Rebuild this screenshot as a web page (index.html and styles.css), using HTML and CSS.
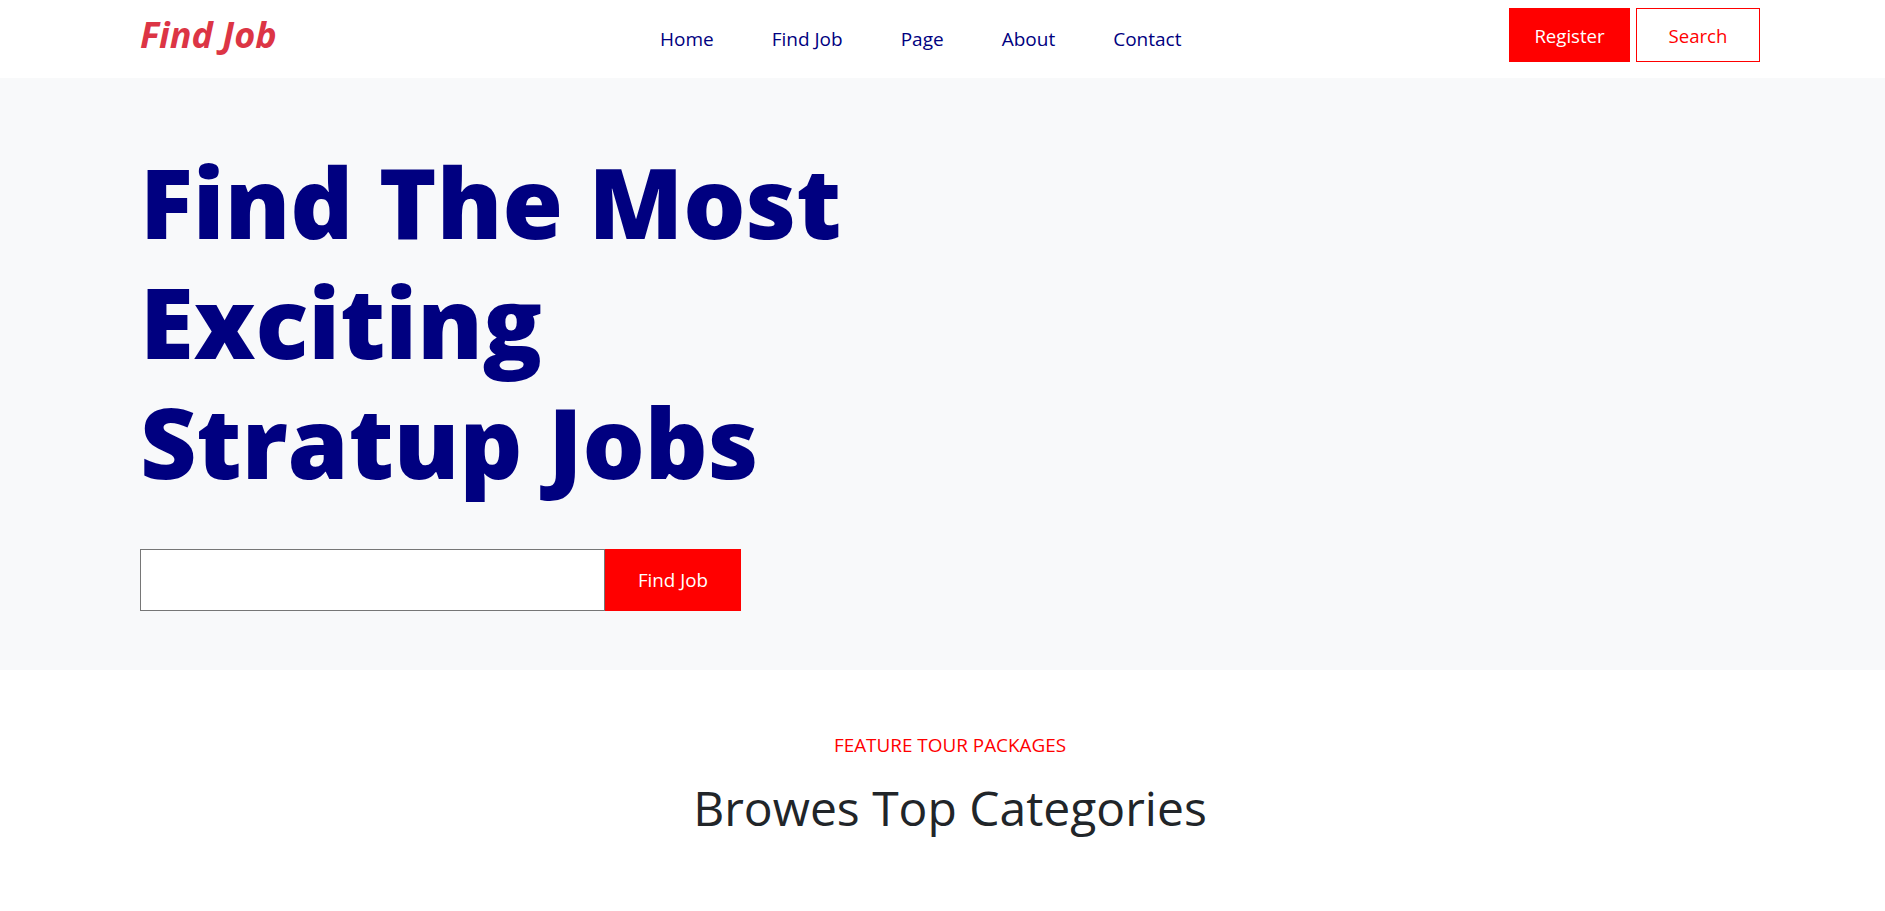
FILE: index.html
```html
<!DOCTYPE html>
<html lang="en">
<head>
<meta charset="utf-8">
<title>Find Job</title>
<link rel="stylesheet" href="styles.css">
</head>
<body>
<header class="site-header">
  <a class="brand" href="#">Find Job</a>
  <nav class="main-nav">
    <a class="nav-link" href="#">Home</a>
    <a class="nav-link" href="#">Find Job</a>
    <a class="nav-link" href="#">Page</a>
    <a class="nav-link" href="#">About</a>
    <a class="nav-link" href="#">Contact</a>
  </nav>
  <div class="header-actions">
    <a class="btn btn-register" href="#">Register</a>
    <a class="btn btn-search" href="#">Search</a>
  </div>
</header>

<section class="hero">
  <div class="hero-inner">
    <h1 class="hero-title">Find The Most<br>Exciting<br>Stratup Jobs</h1>
    <form class="job-search">
      <input class="job-input" type="text" aria-label="Search jobs">
      <button class="job-button" type="button">Find Job</button>
    </form>
  </div>
</section>

<section class="categories">
  <p class="eyebrow">FEATURE TOUR PACKAGES</p>
  <h2 class="section-title">Browes Top Categories</h2>
</section>
</body>
</html>
```

FILE: styles.css
```css
* { box-sizing: border-box; }

body {
  margin: 0;
  font-family: "Open Sans", "Noto Sans", sans-serif;
  color: #212529;
  background: #fff;
}

a { text-decoration: none; }

.site-header {
  height: 78px;
  padding: 8px 125px 0 140px;
  display: grid;
  grid-template-columns: 520px auto 1fr;
  align-items: start;
  background: #fff;
}

.brand {
  font-size: 36px;
  line-height: 54px;
  font-weight: 700;
  font-style: italic;
  color: #dc3545;
}

.main-nav {
  display: flex;
  gap: 58px;
  padding-top: 4px;
}

.nav-link {
  font-size: 19px;
  line-height: 54px;
  color: #000080;
}

.header-actions {
  justify-self: end;
  display: flex;
  gap: 6px;
}

.btn {
  height: 54px;
  display: flex;
  align-items: center;
  justify-content: center;
  font-size: 18.6px;
}

.btn-register {
  width: 121px;
  background: #ff0000;
  color: #fff;
}

.btn-search {
  width: 124px;
  border: 1px solid #ff0000;
  color: #ff0000;
  background: #fff;
}

.hero {
  background: #f8f9fa;
  padding: 63px 0 59px 140px;
}

.hero-title {
  margin: 0;
  font-size: 98px;
  line-height: 120px;
  font-weight: 800;
  color: #000080;
}

.job-search {
  margin-top: 48px;
  display: flex;
  width: 601px;
  height: 62px;
}

.job-input {
  width: 465px;
  height: 62px;
  border: 1px solid #767676;
  background: #fff;
  margin: 0;
  padding: 0 12px;
  font: inherit;
}

.job-button {
  width: 136px;
  height: 62px;
  border: 0;
  margin: 0;
  background: #ff0000;
  color: #fff;
  font-family: inherit;
  font-size: 18.8px;
}

.categories {
  padding: 62px 125px 40px 140px;
  text-align: center;
}

.eyebrow {
  margin: 0;
  font-size: 18.9px;
  line-height: 26px;
  color: #ff0000;
}

.section-title {
  margin: 23px 0 0;
  font-size: 48px;
  line-height: 54px;
  font-weight: 400;
  color: #212529;
}
```
